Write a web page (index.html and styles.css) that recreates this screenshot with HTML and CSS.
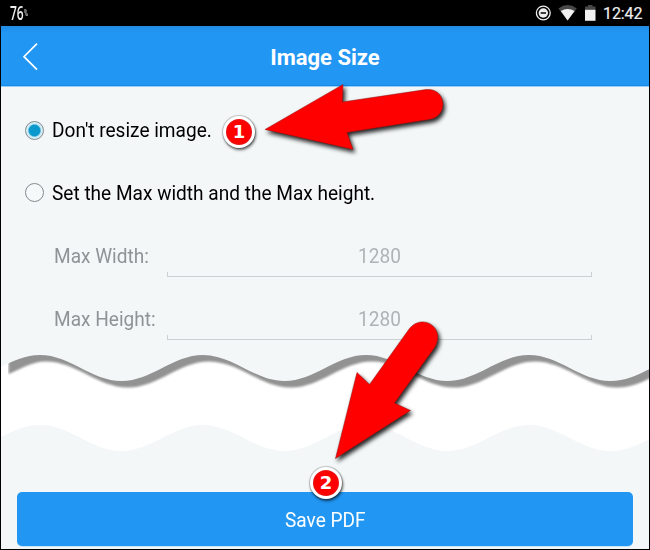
FILE: index.html
```
<!DOCTYPE html>
<html lang="en">
<head>
<meta charset="utf-8">
<title>Image Size</title>
<link rel="stylesheet" href="styles.css">
</head>
<body>
<div class="screen">
  <div class="status">
    <div class="battery-text"><span class="pct">76</span><span class="sign">%</span></div>
    <svg class="status-icons" width="62" height="20" viewBox="534 4 62 20">
      <circle cx="543.3" cy="13" r="6.9" fill="none" stroke="#eee" stroke-width="1.3"/>
      <circle cx="543.3" cy="13" r="4.7" fill="#eee"/>
      <path d="M540.6 13h5.4" stroke="#000" stroke-width="1.5"/>
      <path d="M558.4 8.4Q567.500 1.800 576.800 8.400L567.600 20.500Z" fill="#484848"/>
      <path d="M560.800 11Q567.600 6.800 574.600 11L567.600 20.500Z" fill="#f2f2f2"/>
      <path d="M588 5h4.500v1.500h3v4H585v-4h3Z" fill="#484848"/>
      <path d="M585 9.800h10.500v11H585Z" fill="#f2f2f2"/>
    </svg>
    <span class="clock">12:42</span>
  </div>
  <header class="header">
    <svg class="back" width="20" height="30" viewBox="0 0 20 30"><path d="M16 1.700L3 14.700L16 27.700" fill="none" stroke="#fff" stroke-width="1.700"/></svg>
    <h1 class="title">Image Size</h1>
  </header>
  <main class="content">
    <label class="option"><span class="radio checked"></span><span class="option-text">Don't resize image.</span></label>
    <label class="option"><span class="radio"></span><span class="option-text">Set the Max width and the Max height.</span></label>
    <div class="field"><span class="label">Max Width:</span><span class="value"><span class="number">1280</span></span></div>
    <div class="field"><span class="label">Max Height:</span><span class="value"><span class="number">1280</span></span></div>
  </main>
  <svg class="tear" width="648" height="115" viewBox="1 345 648 115">
    <defs>
      <filter id="soft" x="-5%" y="-20%" width="110%" height="140%"><feGaussianBlur stdDeviation="0.900"/></filter>
      <clipPath id="shadow-area"><path d="M8 345H650V460H8Z"/></clipPath>
    </defs>
    <path fill="#fff" d="M0 345H650V460H0Z"/>
    <g clip-path="url(#shadow-area)"><path filter="url(#soft)" fill="#929292" d="M8.500 345V374C20 370 30 361.500 46 361.500C76 361.500 98 387.500 128 387.500S179 361.500 209 361.500S261 387.500 291 387.500S342 361.500 372 361.500S424 387.500 454 387.500S505 361.500 535 361.500S587 387.500 617 387.500S668 361.500 698 361.500V345Z"/></g>
    <path fill="#f3f7f8" d="M-41.500 381C-11.500 381 10 355 40 355S91.500 381 121.500 381S173 355 203 355S254.500 381 284.500 381S336 355 366 355S417.500 381 447.500 381S499 355 529 355S580.500 381 610.500 381S662 355 692 355V340H-41Z"/>
    <path fill="#f3f7f8" d="M-41.500 451C-11.500 451 10 425 40 425S91.500 451 121.500 451S173 425 203 425S254.500 451 284.500 451S336 425 366 425S417.500 451 447.500 451S499 425 529 425S580.500 451 610.500 451S662 425 692 425V465H-41Z"/>
  </svg>
  <footer class="footer"><button class="save"><span class="save-text">Save PDF</span></button></footer>
  <svg class="arrows" width="650" height="550" viewBox="0 0 650 550">
    <g fill="#f00" stroke="#8b1010" stroke-width="0.500">
      <path d="M265 129.500L343 84.500L342.500 102L426 89.600C447 87.500 449 117 429 119.500L347 132.500L353 149.500Z"/>
      <path d="M335.500 458.500L357 372.500L369.500 384.500L409.500 328.500C422 313 446 327 435 347L394.500 403L410.500 410.500Z"/>
    </g>
  </svg>
  <span class="badge one">1</span>
  <span class="badge two">2</span>
</div>
</body>
</html>
```
FILE: styles.css
```
* { box-sizing: border-box; }
body { margin: 0; font-family: Roboto, sans-serif; }
.screen {
  position: relative;
  width: 650px;
  height: 550px;
  overflow: hidden;
  display: flex;
  flex-direction: column;
  background: #f3f7f8;
  border: 1px solid #000;
  border-top: 0;
}
.status {
  height: 26px;
  flex: none;
  display: flex;
  align-items: center;
  background: #000;
  color: #eee;
  padding: 0 8px 0 9px;
}
.battery-text { display: flex; align-items: center; flex: 1; }
.pct { font: 600 20px/26px "Open Sans", sans-serif; transform: scaleX(.6); transform-origin: left; width: 14px; }
.sign { font: 9px/10px Roboto, sans-serif; transform: scaleX(.6); transform-origin: left; }
.status-icons { margin-top: 2px; }
.clock { font-size: 16px; line-height: 26px; width: 38px; margin-left: 7px; padding-top: 1px; letter-spacing: -.1px; -webkit-text-stroke: .2px #eee; }
.header {
  height: 60px;
  flex: none;
  display: grid;
  grid-template-columns: 60px 1fr 60px;
  align-items: center;
  background: linear-gradient(#218ce3, #2196f3 7px);
  border-bottom: 1px solid #168ae8;
  box-shadow: 0 1px #9bcffa;
}
.back { margin: 3px 0 0 20px; }
.title { margin: 4px 0 0; text-align: center; color: #fff; font-size: 22px; font-weight: 700; }
.content { height: 259px; flex: none; padding: 13px 57px 0 24px; }
.option { display: flex; align-items: center; height: 62.500px; gap: 8px; }
.radio {
  width: 19px;
  height: 19px;
  border: 1px solid #858a8d;
  border-radius: 50%;
  background: #f6f9fa;
}
.checked { background: radial-gradient(circle, #0b98cc 5.300px, #d2edf7 6.800px); }
.option-text { font-size: 20px; color: #000; transform: scaleX(.953); transform-origin: left; }
.field { display: flex; align-items: center; height: 63px; padding-left: 29px; font-size: 20px; color: #909395; }
.label { width: 118.600px; margin-right: -5.600px; flex: none; white-space: nowrap; transform: scaleX(.953); transform-origin: left; }
.value {
  flex: 1;
  height: 42px;
  line-height: 42px;
  text-align: center;
  color: #b0b3b5;
  background: linear-gradient(#ccd0d2, #ccd0d2) left bottom / 1px 4px no-repeat, linear-gradient(#ccd0d2, #ccd0d2) right bottom / 1px 4px no-repeat;
  border-bottom: 1px solid #ccd0d2;
}
.number { display: inline-block; transform: scaleX(.953); }
.tear { flex: none; display: block; }
.footer { padding: 32px 16px 0; }
.save {
  display: block;
  width: 100%;
  height: 54px;
  padding: 2px 0 0;
  border: 0;
  border-radius: 5px;
  background: #2196f3;
  box-shadow: 0 1px #c5e2f8;
  color: #fff;
  font: 20px Roboto, sans-serif;
}
.save-text { display: inline-block; transform: scaleX(.953); }
.arrows { position: absolute; left: -1px; top: 0; filter: drop-shadow(2px 3px 2px rgba(0, 0, 0, .85)); }
.badge {
  position: absolute;
  width: 32px;
  height: 32px;
  border: 3.500px solid #fff;
  border-radius: 50%;
  background: #f00;
  color: #fff;
  text-align: center;
  font: bold 18px/26px "DejaVu Sans", sans-serif;
  box-shadow: 1px 2px 3px rgba(0, 0, 0, .6), 0 0 1px 1px rgba(0, 0, 0, .2), inset 0 0 2px #a44;
}
.one { left: 222px; top: 116px; }
.two { left: 309px; top: 467px; }
```
